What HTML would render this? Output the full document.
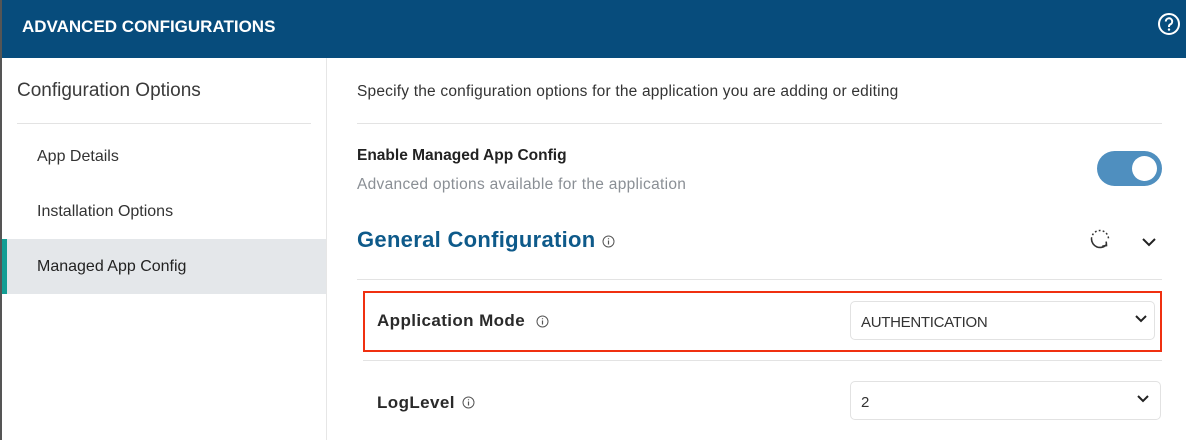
<!DOCTYPE html><html><head><style>
*{margin:0;padding:0;box-sizing:border-box}
body{width:1186px;height:440px;overflow:hidden;background:#fff;font-family:"Liberation Sans",sans-serif;position:relative;color:#333}
.a{position:absolute;white-space:nowrap}
.hdr{left:0;top:0;width:1186px;height:58px;background:#074c7c}
.ln{position:absolute;height:1px;background:#e3e3e3}
.sel{position:absolute;left:850px;width:311px;height:39px;border:1px solid #e2e2e2;border-radius:5px;font-size:15px;color:#333;padding:12px 0 0 10px}
.chev{position:absolute;right:10px;top:12px}
</style></head><body>
<div class="a hdr"></div>
<div class="a" style="left:0;top:0;width:2px;height:440px;background:#555"></div>
<div class="a" style="left:22px;top:17px;color:#fff;font-weight:bold;font-size:17px;letter-spacing:0px">ADVANCED CONFIGURATIONS</div>
<svg class="a" style="left:1157px;top:12px" width="24" height="24" viewBox="0 0 24 24"><circle cx="12" cy="12" r="10" fill="none" stroke="#fff" stroke-width="2"/><path d="M8.8 9.5a3.2 3.2 0 1 1 4.5 2.9c-.9.5-1.3 1-1.3 2v.6" fill="none" stroke="#fff" stroke-width="2"/><circle cx="12" cy="17.6" r="1.2" fill="#fff"/></svg>
<div class="a" style="left:326px;top:58px;width:1px;height:382px;background:#e6e6e6"></div>
<div class="a" style="left:17px;top:80px;font-size:19px;color:#3a3a3a">Configuration Options</div>
<div class="ln" style="left:17px;top:123px;width:294px"></div>
<div class="a" style="left:37px;top:148px;font-size:16px;color:#333">App Details</div>
<div class="a" style="left:37px;top:203px;font-size:16px;color:#333">Installation Options</div>
<div class="a" style="left:2px;top:239px;width:324px;height:55px;background:#e4e7ea"></div>
<div class="a" style="left:2px;top:239px;width:5px;height:55px;background:#139e94"></div>
<div class="a" style="left:37px;top:258px;font-size:16px;color:#222">Managed App Config</div>
<div class="a" style="left:357px;top:83px;font-size:15.5px;color:#333;letter-spacing:0.2px">Specify the configuration options for the application you are adding or editing</div>
<div class="ln" style="left:357px;top:123px;width:805px"></div>
<div class="a" style="left:357px;top:147px;font-size:15.5px;font-weight:bold;color:#222;letter-spacing:0px">Enable Managed App Config</div>
<div class="a" style="left:357px;top:176px;font-size:15.5px;color:#8a8f95;letter-spacing:0.3px">Advanced options available for the application</div>
<div class="a" style="left:1097px;top:151px;width:65px;height:35px;border-radius:18px;background:#4f8fbf"></div>
<div class="a" style="left:1132px;top:156px;width:25px;height:25px;border-radius:50%;background:#fff"></div>
<div class="a" style="left:357px;top:227px;font-size:22px;color:#0e5a8a;font-weight:bold;letter-spacing:0.3px">General Configuration</div>
<svg class="a" style="left:602px;top:235px" width="13" height="13" viewBox="0 0 13 13"><circle cx="6.5" cy="6.5" r="5.5" fill="none" stroke="#555" stroke-width="1"/><path d="M6.5 5.5v4M6.5 3.3v1" stroke="#555" stroke-width="1.2"/></svg>
<svg class="a" style="left:1088px;top:227px" width="24" height="24" viewBox="0 0 24 24"><path d="M3.5 12A8.5 8.5 0 0 1 20.5 12" fill="none" stroke="#333" stroke-width="1.5" stroke-dasharray="1.8 2.2"/><path d="M3.5 12a8.5 8.5 0 0 0 14.5 6" fill="none" stroke="#333" stroke-width="1.6"/><path d="M14.3 19.2l4.2-.6-.3-4" fill="none" stroke="#333" stroke-width="1.6"/></svg>
<svg class="a" style="left:1141px;top:236px" width="16" height="12" viewBox="0 0 16 12"><path d="M2 3l6 6 6-6" fill="none" stroke="#222" stroke-width="2"/></svg>
<div class="ln" style="left:357px;top:279px;width:805px"></div>
<div class="a" style="left:363px;top:291px;width:799px;height:61px;border:2px solid #f03010"></div>
<div class="a" style="left:377px;top:311px;font-size:17px;font-weight:bold;color:#2a2a2a;letter-spacing:0.4px">Application Mode</div>
<svg class="a" style="left:536px;top:315px" width="13" height="13" viewBox="0 0 13 13"><circle cx="6.5" cy="6.5" r="5.5" fill="none" stroke="#555"/><path d="M6.5 5.5v4M6.5 3.3v1" stroke="#555" stroke-width="1.2"/></svg>
<div class="sel" style="top:301px;width:305px;letter-spacing:-0.3px">AUTHENTICATION<svg class="chev" style="right:6px" width="14" height="10" viewBox="0 0 14 10"><path d="M2 2l5 5 5-5" fill="none" stroke="#222" stroke-width="2"/></svg></div>
<div class="ln" style="left:363px;top:360px;width:799px"></div>
<div class="a" style="left:377px;top:393px;font-size:17px;font-weight:bold;color:#2a2a2a;letter-spacing:0.4px">LogLevel</div>
<svg class="a" style="left:462px;top:396px" width="13" height="13" viewBox="0 0 13 13"><circle cx="6.5" cy="6.5" r="5.5" fill="none" stroke="#555"/><path d="M6.5 5.5v4M6.5 3.3v1" stroke="#555" stroke-width="1.2"/></svg>
<div class="sel" style="top:381px">2<svg class="chev" width="14" height="10" viewBox="0 0 14 10"><path d="M2 2l5 5 5-5" fill="none" stroke="#222" stroke-width="2"/></svg></div>
</body></html>
